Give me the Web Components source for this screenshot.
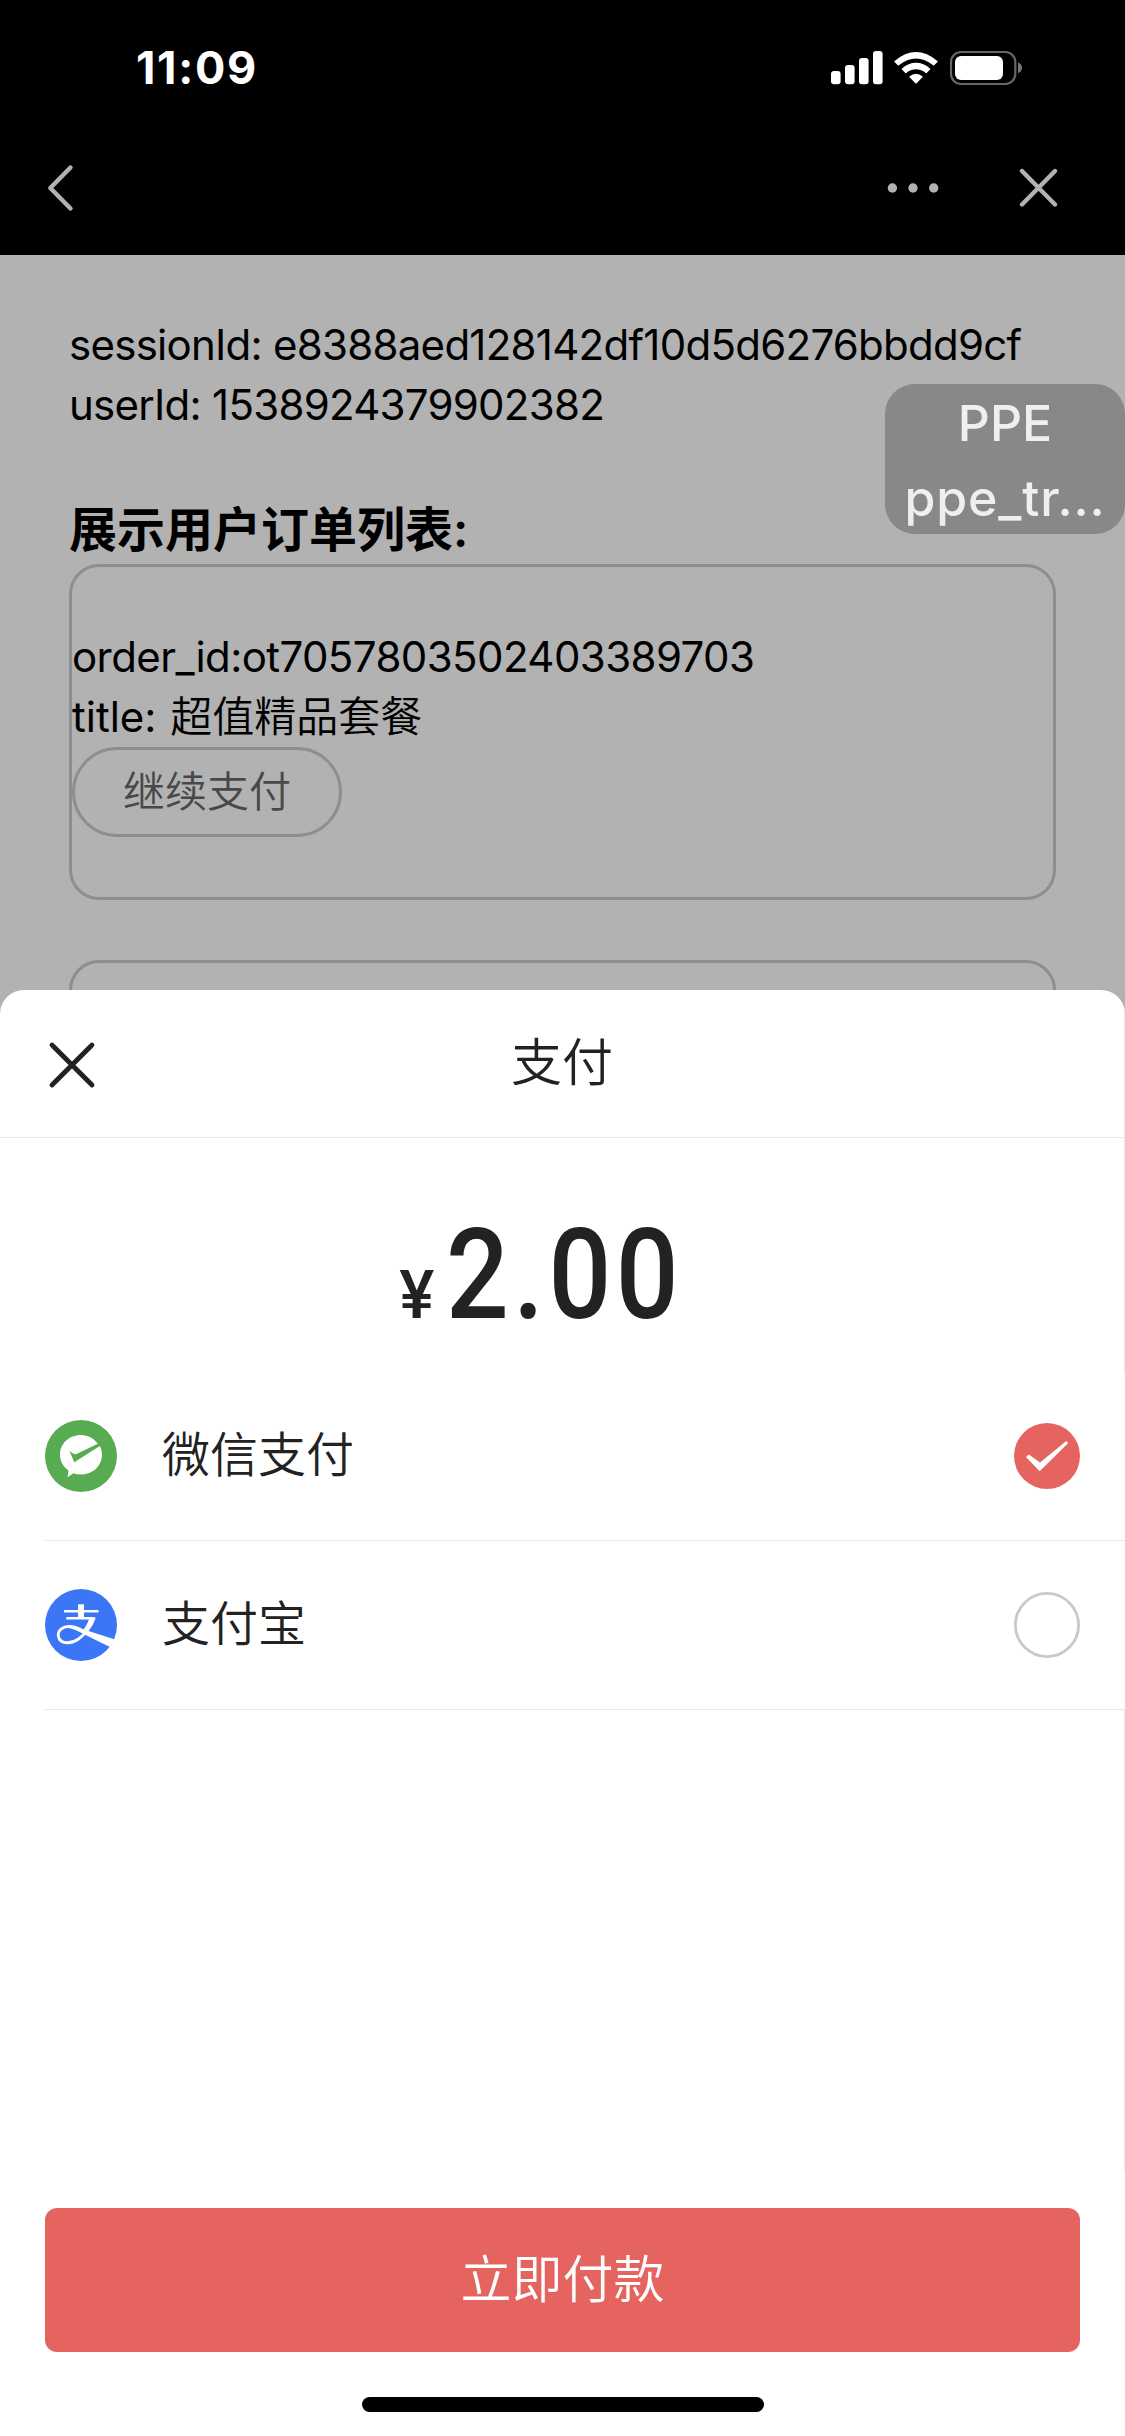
<!DOCTYPE html>
<html lang="zh-CN">
<head>
<meta charset="utf-8">
<title>支付</title>
<style>
  body {
    margin: 0;
    width: 1125px;
    height: 2436px;
    overflow: hidden;
    font-family: Inter, "Noto Sans CJK SC", sans-serif;
    font-size: 42px;
    font-weight: 400;
    line-height: 60px;
    color: #000;
  }
</style>
</head>
<body>
<pay-screen>
  <status-bar slot="top" time="11:09"></status-bar>
  <nav-bar slot="top"></nav-bar>

  <info-line>sessionId: e8388aed128142df10d5d6276bbdd9cf</info-line>
  <info-line>userId: 1538924379902382</info-line>
  <list-heading>展示用户订单列表:</list-heading>
  <order-card order-id="ot7057803502403389703" name="超值精品套餐">继续支付</order-card>
  <order-card order-id="" name=""></order-card>

  <env-badge slot="overlay" env="PPE">ppe_tr...</env-badge>

  <pay-sheet slot="overlay" heading="支付" amount="2.00">
    <pay-option type="wechat" checked>微信支付</pay-option>
    <pay-option type="alipay">支付宝</pay-option>
    <pay-button slot="footer">立即付款</pay-button>
  </pay-sheet>
</pay-screen>

<script>
class BaseElement extends HTMLElement {
  constructor() {
    super();
    this.attachShadow({ mode: 'open' });
  }

  connectedCallback() {
    this.shadowRoot.innerHTML = this.render();
  }
}

class PayScreen extends BaseElement {
  render() {
    return `
      <style>
        :host { display: flex; flex-direction: column; position: relative; width: 1125px; height: 2436px; overflow: hidden; background: #b2b2b2; }
        main { flex: 1; min-height: 0; padding: 60px 69px 0; overflow: hidden; }
      </style>
      <slot name="top"></slot>
      <main><slot></slot></main>
      <slot name="overlay"></slot>
    `;
  }
}

class StatusBar extends BaseElement {
  render() {
    return `
      <style>
        :host { display: flex; justify-content: space-between; align-items: center; box-sizing: border-box; height: 132px; padding: 4px 102px 0 136px; background: #000; color: #fff; }
        .time { font-size: 45px; font-weight: 700; letter-spacing: 1.7px; }
        svg { display: block; }
      </style>
      <span class="time">${this.getAttribute('time')}</span>
      <svg width="193" height="36" viewBox="830 50 193 36" fill="#fff">
        <rect x="831" y="71" width="9.6" height="13.3" rx="3"/>
        <rect x="845" y="65" width="9.6" height="19.3" rx="3"/>
        <rect x="859" y="58" width="9.6" height="26.3" rx="3"/>
        <rect x="873" y="51" width="9.6" height="33.3" rx="3"/>
        <path d="M894.3 61.2Q905 52 916 52T937.7 61.2Q938 61.5 937.5 62L934.2 65.3Q933.7 65.7 933.2 65.3Q925 58.4 916 58.4T898.8 65.3Q898.3 65.7 897.8 65.3L894.5 62Q894 61.5 894.3 61.2Z"/>
        <path d="M901.8 68.7Q908.3 62.8 916 62.8T930.2 68.7Q930.6 69.2 930.1 69.6L926.7 73Q926.2 73.5 925.7 73Q921.3 69.3 916 69.3T906.3 73Q905.8 73.5 905.3 73L901.9 69.6Q901.4 69.2 901.8 68.7Z"/>
        <path d="M909.7 76.3Q912.5 73.8 916 73.8T922.3 76.3Q922.9 76.8 922.4 77.3L916.7 83.2Q916 83.8 915.3 83.2L909.6 77.3Q909.1 76.8 909.7 76.3Z"/>
        <rect x="951" y="52" width="64.3" height="32" rx="10" fill="none" stroke="#666" stroke-width="2.2"/>
        <rect x="955" y="56" width="48" height="24" rx="6"/>
        <path d="M1018 62.5Q1022 64 1022 67.8T1018 73.2Z" fill="#777"/>
      </svg>
    `;
  }
}

class NavBar extends BaseElement {
  render() {
    return `
      <style>
        :host { display: flex; align-items: center; box-sizing: border-box; height: 123px; padding: 0 66px 11px 46px; background: #000; }
        svg { display: block; fill: none; stroke: #b2b2b2; stroke-width: 4.4; stroke-linecap: round; stroke-linejoin: round; }
        .more { margin-left: auto; margin-right: 80px; fill: #b2b2b2; stroke: none; }
      </style>
      <svg width="28" height="48"><path d="M24.5 3.5L4.3 24L24.5 44.5"/></svg>
      <svg class="more" width="52" height="12"><circle cx="5.4" cy="6" r="4.7"/><circle cx="26" cy="6" r="4.7"/><circle cx="46.7" cy="6" r="4.7"/></svg>
      <svg width="40" height="40"><path d="M3 3L36 36.5M36 3L3 36.5"/></svg>
    `;
  }
}

class InfoLine extends BaseElement {
  render() {
    return `
      <style>:host { display: block; white-space: nowrap; letter-spacing: -0.73px; }</style>
      <slot></slot>
    `;
  }
}

class ListHeading extends BaseElement {
  render() {
    return `
      <style>:host { display: block; margin-top: 60px; font-size: 48px; font-weight: 600; line-height: 69px; }</style>
      <slot></slot>
    `;
  }
}

class OrderCard extends BaseElement {
  render() {
    const id = this.getAttribute('order-id');
    const body = id ? `
      <div class="id">order_id:${id}</div>
      <div>title: <span class="name">${this.getAttribute('name')}</span></div>
      <button><slot></slot></button>` : '';
    return `
      <style>
        :host { display: block; box-sizing: border-box; height: 336px; margin-bottom: 60px; padding: 60px 0; border: 3px solid #8e8e8e; border-radius: 30px; }
        div { white-space: nowrap; }
        .id { letter-spacing: -0.58px; }
        .name { margin-left: 2px; font-weight: 350; }
        button { display: block; box-sizing: border-box; height: 90px; padding: 0 48px; border: 3px solid #8e8e8e; border-radius: 45px; background: none; font: inherit; font-weight: 350; color: #484848; }
      </style>
      ${body}
    `;
  }
}

class EnvBadge extends BaseElement {
  render() {
    return `
      <style>
        :host { position: absolute; top: 384px; right: 0; display: flex; flex-direction: column; align-items: center; box-sizing: border-box; width: 240px; height: 150px; padding-top: 2px; border-radius: 30px; background: #888; color: #efefef; font-size: 50px; font-weight: 550; line-height: 75px; }
        .name { letter-spacing: 0.9px; }
      </style>
      <span>${this.getAttribute('env')}</span>
      <span class="name"><slot></slot></span>
    `;
  }
}

class PaySheet extends BaseElement {
  render() {
    return `
      <style>
        :host { position: absolute; left: 0; right: 0; bottom: 0; display: flex; flex-direction: column; box-sizing: border-box; height: 1446px; border-radius: 24px 24px 0 0; background: #fff; color: #222; font-weight: 350; overflow: hidden; }
        header { display: grid; grid-template-columns: 1fr auto 1fr; align-items: center; box-sizing: border-box; height: 148px; padding: 0 48px; border-bottom: 1px solid #e6e6e6; border-right: 1px solid #e9e9e9; font-size: 51px; }
        header svg { display: block; margin-top: 2px; fill: none; stroke: #222; stroke-width: 4.8; stroke-linecap: round; }
        header span { padding-bottom: 2px; }
        .amount { display: flex; justify-content: center; align-items: baseline; gap: 12px; box-sizing: border-box; height: 234px; padding: 67px 6px 0 0; border-right: 1px solid #e9e9e9; font-family: Roboto, sans-serif; font-weight: 500; line-height: 140px; }
        .amount small { font-size: 66px; }
        .amount b { font-size: 127px; font-weight: 500; letter-spacing: 5.2px; transform: scaleX(.87); transform-origin: left; }
        .rest { flex: 1; margin-bottom: 38px; border-right: 1px solid #e9e9e9; }
        .home { width: 402px; height: 15px; margin: 45px auto 24px; border-radius: 8px; background: #000; }
      </style>
      <header>
        <svg width="48" height="48"><path d="M4 4L44 44M44 4L4 44"/></svg>
        <span>${this.getAttribute('heading')}</span>
      </header>
      <div class="amount"><small>¥</small><b>${this.getAttribute('amount')}</b></div>
      <slot></slot>
      <div class="rest"></div>
      <slot name="footer"></slot>
      <div class="home"></div>
    `;
  }
}

const LOGOS = {
  wechat: `
    <circle cx="36" cy="36" r="36" fill="#57ab50"/>
    <path d="M36 15C24 15 15 23.8 15 34.5C15 41 18 46.8 23.5 50.5L22.5 57.3L28.5 53.2Q32 54.5 36 54.5C48 54.5 57 45.5 57 34.5Q57 29.5 54.8 26L29.3 42.3L24.3 30.5Q26.5 32.5 29 34Q31 34.5 33 33.3L52.8 23.8C49 18.5 43.5 15 36 15Z" fill="#fff"/>`,
  alipay: `
    <circle cx="36" cy="36" r="36" fill="#3b76f6"/>
    <g fill="none" stroke="#fff">
      <path d="M19 22.3H53.5M21.3 29.3H48.5" stroke-width="2.6"/>
      <path d="M36 15.3V29" stroke-width="6"/>
      <path d="M48 28.5C45.5 37.5 40.5 45 33.5 50C26.5 55 16 55.5 13.7 48.5C11.5 41.5 18 37 26 37.5" stroke-width="2.8"/>
    </g>
    <path d="M44.5 28L50.7 28.6C49 34 46.5 38.5 43.5 42L70 50.5Q68 54.5 64.5 57.7L37.5 44.5C32.5 41.5 27 39.5 22 38.8L25 36C30.5 36.2 34.5 38 38.5 40.5C41.5 36.5 43.5 32.5 44.5 28Z" fill="#fff"/>`
};

class PayOption extends BaseElement {
  render() {
    const mark = this.hasAttribute('checked')
      ? '<circle cx="33" cy="33" r="33" fill="#e5645f"/><path d="M12 34L14.8 31.5L26 39.6L52 18.2Q53.5 18 54 20.3L25.7 48.2Z" fill="#fff"/>'
      : '<circle cx="33" cy="33" r="31.6" fill="none" stroke="#c9c9c9" stroke-width="2.8"/>';
    return `
      <style>
        :host { display: flex; align-items: center; height: 168px; margin-left: 45px; padding-right: 45px; border-bottom: 1px solid #e6e6e6; font-size: 48px; }
        svg { display: block; flex: none; }
        .label { flex: 1; margin-left: 45px; padding-bottom: 2px; }
      </style>
      <svg width="72" height="72">${LOGOS[this.getAttribute('type')]}</svg>
      <span class="label"><slot></slot></span>
      <svg width="66" height="66">${mark}</svg>
    `;
  }
}

class PayButton extends BaseElement {
  render() {
    return `
      <style>
        :host { display: flex; align-items: center; justify-content: center; height: 144px; margin: 0 45px; border-radius: 12px; background: #e5645f; color: #fff; font-size: 51px; }
      </style>
      <slot></slot>
    `;
  }
}

customElements.define('pay-screen', PayScreen);
customElements.define('status-bar', StatusBar);
customElements.define('nav-bar', NavBar);
customElements.define('info-line', InfoLine);
customElements.define('list-heading', ListHeading);
customElements.define('order-card', OrderCard);
customElements.define('env-badge', EnvBadge);
customElements.define('pay-sheet', PaySheet);
customElements.define('pay-option', PayOption);
customElements.define('pay-button', PayButton);
</script>
</body>
</html>
